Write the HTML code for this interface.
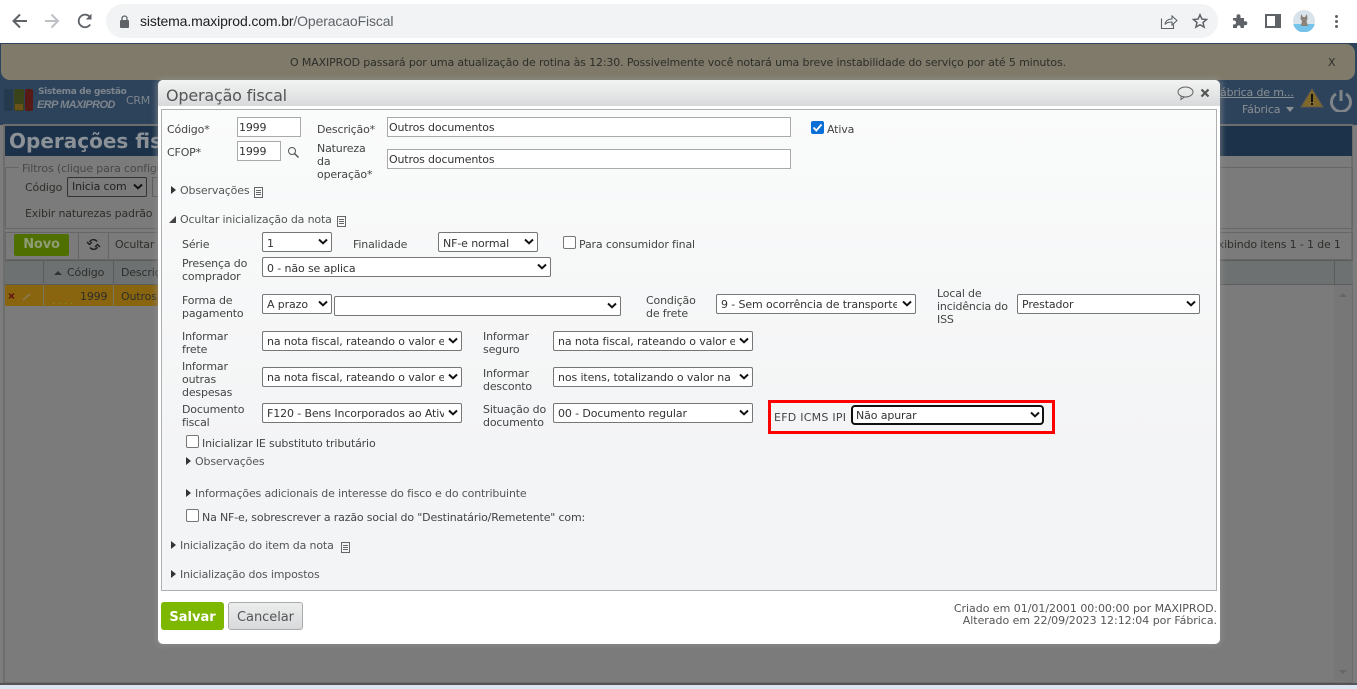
<!DOCTYPE html>
<html lang="pt"><head><meta charset="utf-8"><title>Operação fiscal</title>
<style>
html,body{margin:0;padding:0}
body{width:1357px;height:689px;overflow:hidden;position:relative;background:#7c7c7c;font:11px/13px "DejaVu Sans",Verdana,sans-serif;color:#444;letter-spacing:-.16px}
.a{position:absolute;white-space:nowrap}
.t{position:absolute;white-space:pre;color:#444;line-height:13px}
.i{position:absolute;box-sizing:border-box;background:#fff;border:1px solid #aaa;color:#333;padding:0 0 0 1px;white-space:nowrap;overflow:hidden;line-height:19px}
.s{position:absolute;box-sizing:border-box;background:#fff;border:1px solid #767676;border-radius:2px;color:#333;white-space:nowrap;overflow:hidden;height:20px;line-height:19px;padding-left:4px;letter-spacing:-.12px}
.s span{display:block;overflow:hidden}
.s svg{position:absolute;right:3px;top:5px;background:#fff;padding-left:2px}
.c{position:absolute;box-sizing:border-box;width:13px;height:13px;background:#fff;border:1px solid #767676;border-radius:2px}
.tri{position:absolute;width:0;height:0;border-top:4px solid transparent;border-bottom:4px solid transparent;border-left:5px solid #333}
.d{position:absolute;color:#2e2e2a;white-space:pre}
</style></head><body>
<svg width="0" height="0" style="position:absolute"><defs>
<symbol id="chev" viewBox="0 0 10 7"><path d="M1 1.500 5 5.300 9 1.500" fill="none" stroke="#111" stroke-width="2"/></symbol>
<symbol id="doc" viewBox="0 0 9 11"><path d="M.5.5h8v10h-8zM2 3.500h5M2 5.500h5M2 7.500h5" fill="none" stroke="#666" stroke-width="1"/></symbol>
</defs></svg>

<!-- browser toolbar -->
<div class="a" style="left:0;top:0;width:1357px;height:43px;background:#fff"></div>
<div class="a" style="left:106px;top:4px;width:1112px;height:34px;border-radius:17px;background:#f1f3f4"></div>
<svg class="a" style="left:10px;top:11px" width="60" height="20" viewBox="0 0 60 20" fill="none">
<path d="M17 10H4M10 3.500 3.500 10l6.500 6.500" stroke="#5f6368" stroke-width="2"/>
<path d="M35 10h13M41.500 3.500 48 10l-6.500 6.500" stroke="#bdc1c6" stroke-width="2"/>
</svg>
<svg class="a" style="left:76px;top:12px" width="18" height="18" viewBox="0 0 18 18" fill="none"><path d="M14.200 12.500A6.300 6.300 0 1 1 14.300 5.500" stroke="#5f6368" stroke-width="1.800"/><path d="M15.500 1.800V7.500H9.800Z" fill="#5f6368"/></svg>
<svg class="a" style="left:119px;top:15px" width="11" height="13" viewBox="0 0 11 13"><rect x="1" y="5" width="9" height="8" rx="1" fill="#5f6368"/><path d="M3 5.500V3.500a2.500 2.500 0 0 1 5 0v2" fill="none" stroke="#5f6368" stroke-width="1.300"/></svg>
<div class="a" style="left:140px;top:13px;font:14px/17px 'Liberation Sans',sans-serif;color:#202124;letter-spacing:-.13px">sistema.maxiprod.com.br<span style="color:#5f6368">/OperacaoFiscal</span></div>
<svg class="a" style="left:1160px;top:13px" width="18" height="17" viewBox="0 0 18 17" fill="none" stroke="#5f6368" stroke-width="1.100"><path d="M1.500 5.500v10h12v-4"/><path d="M5 11.500c.5-3.500 3-5.500 7-5.500V3l5 4.500-5 4.500V9c-3 0-5.500.5-7 2.500z"/></svg>
<svg class="a" style="left:1192px;top:13px" width="16" height="16" viewBox="0 0 16 16" fill="none"><path d="M8 1.800l1.900 4.300 4.600.4-3.500 3 1.100 4.600L8 11.700l-4.100 2.400L5 9.500l-3.500-3 4.600-.4z" stroke="#5f6368" stroke-width="1.500"/></svg>
<svg class="a" style="left:1232px;top:13px" width="16" height="16" viewBox="0 0 16 16"><path d="M1 5h3.500V3.200a2 2 0 0 1 4 0V5H12v3.200h1.300a2 2 0 0 1 0 4H12V15H8.500v-1.300a1.800 1.800 0 0 0-3.500 0V15H1v-3.500h1a2 2 0 0 0 0-4H1z" fill="#5f6368"/></svg>
<div class="a" style="left:1265px;top:14px;width:8px;height:10px;border:2px solid #5f6368;border-right-width:6px"></div>
<svg class="a" style="left:1293px;top:10px" width="22" height="22" viewBox="0 0 22 22"><circle cx="11" cy="11" r="11" fill="#d8e3ec"/><path d="M.3 14h21.400A11 11 0 0 1 .3 14z" fill="#75c3e8"/><path d="M8 4l2 3h2l2-3 .5 5-1 2 1.500 5H8l1-5-1.500-2z" fill="#8b8378"/></svg>
<div class="a" style="left:1335px;top:15px;width:3px;height:3px;border-radius:2px;background:#5f6368;box-shadow:0 5px 0 #5f6368,0 10px 0 #5f6368"></div>

<!-- dimmed page -->
<div class="a" style="left:0;top:43px;width:1357px;height:646px;background:#7c7c7c"></div>
<div class="a" style="left:0;top:43px;width:1357px;height:82px;background:#2d435c"></div>
<div class="a" style="left:1px;top:44px;width:1354px;height:36px;background:#7f7a69;border-radius:0 9px 9px 9px"></div>
<div class="d" style="left:290px;top:56px;line-height:13px;letter-spacing:-.14px">O MAXIPROD passará por uma atualização de rotina às 12:30. Possivelmente você notará uma breve instabilidade do serviço por até 5 minutos.</div>
<div class="d" style="left:1328px;top:56px">X</div>
<div class="a" style="left:4px;top:89px;width:9px;height:22px;border-radius:2px;background:#263a4e"></div>
<div class="a" style="left:14px;top:89px;width:10px;height:22px;border-radius:2px;background:#3a4418"></div>
<div class="a" style="left:15px;top:104px;width:8px;height:6px;background:#6a5219"></div>
<div class="a" style="left:25px;top:89px;width:8px;height:22px;border-radius:2px;background:#571a15"></div>
<div class="a" style="left:38px;top:87px;font:bold 9px/11px 'DejaVu Sans',sans-serif;color:#7d858c;letter-spacing:-.33px">Sistema de gestão</div>
<div class="a" style="left:37px;top:98px;font:italic bold 11px/14px 'Liberation Sans',sans-serif;color:#7d858c;letter-spacing:-.55px">ERP MAXIPROD</div>
<div class="a" style="left:126px;top:94px;color:#7d858c;letter-spacing:-.3px">CRM</div>
<div class="a" style="left:1220px;top:86px;color:#8a8f93;text-decoration:underline">ábrica de m...</div>
<div class="a" style="left:1242px;top:103px;color:#8a8f93">Fábrica</div>
<div class="a" style="left:1286px;top:107px;border-left:4px solid transparent;border-right:4px solid transparent;border-top:5px solid #8a8f93"></div>
<svg class="a" style="left:1300px;top:88px" width="24" height="20" viewBox="0 0 24 20"><path d="M12 1 23 19H1z" fill="#80682a" stroke="#5d5a4f"/><path d="M11 6h2v8h-2zM11 15h2v2h-2z" fill="#111"/></svg>
<svg class="a" style="left:1329px;top:88px" width="24" height="24" viewBox="0 0 24 24" fill="none" stroke="#7e8488" stroke-width="3"><path d="M7 6a9.500 9.500 0 1 0 10 0"/><path d="M12 2v11"/></svg>

<!-- page content behind -->
<div class="a" style="left:3px;top:124px;width:1350px;height:560px;box-sizing:border-box;border:2px solid #6d6d6d;background:#7b7b7b"></div>
<div class="a" style="left:5px;top:126px;width:1347px;height:30px;background:#1b324a"></div>
<div class="a" style="left:9px;top:127px;font:bold 20px/28px 'DejaVu Sans',sans-serif;color:#8b9197;letter-spacing:0">Operações fiscais</div>
<div class="a" style="left:5px;top:167px;width:1348px;height:62px;box-sizing:border-box;border:1px solid #666"></div>
<div class="a" style="left:19px;top:162px;background:#7b7b7b;color:#484848;padding:0 3px">Filtros (clique para configurar)</div>
<div class="d" style="left:25px;top:181px">Código</div>
<div class="a" style="left:67px;top:177px;width:80px;height:20px;box-sizing:border-box;border:1px solid #333;border-radius:2px;padding:2px 0 0 4px;color:#222">Inicia com<svg style="position:absolute;right:3px;top:5px" width="10" height="7"><use href="#chev"/></svg></div>
<div class="a" style="left:152px;top:177px;width:20px;height:20px;box-sizing:border-box;border:1px solid #5c5c5c"></div>
<div class="d" style="left:25px;top:207px">Exibir naturezas padrão</div>
<div class="a" style="left:5px;top:232px;width:1348px;height:28px;box-sizing:border-box;border:1px solid #666"></div>
<div class="a" style="left:14px;top:234px;width:55px;height:22px;background:#4f7000;border-radius:2px;font:bold 13px/22px 'DejaVu Sans',sans-serif;color:#8f9c75;text-align:center">Novo</div>
<div class="a" style="left:78px;top:232px;width:1px;height:27px;background:#666"></div>
<svg class="a" style="left:86px;top:238px" width="15" height="13" viewBox="0 0 15 13" fill="none" stroke="#222" stroke-width="1.500"><path d="M11 3.500C9 1 5 1 3.500 4"/><path d="M1 4l2.500 2.500L6 4" /><path d="M4 9.500c2 2.500 6 2.500 7.500-.5"/><path d="M14 9l-2.500-2.500L9 9"/></svg>
<div class="a" style="left:108px;top:232px;width:1px;height:27px;background:#666"></div>
<div class="d" style="left:115px;top:238px">Ocultar</div>
<div class="d" style="left:1211px;top:238px">Exibindo itens 1 - 1 de 1</div>
<div class="a" style="left:5px;top:260px;width:1348px;height:25px;background:#6e7172;border-top:1px solid #5c5c5c;border-bottom:1px solid #5c5c5c;box-sizing:border-box"></div>
<div class="a" style="left:43px;top:260px;width:1px;height:25px;background:#5c5c5c"></div>
<div class="a" style="left:113px;top:260px;width:1px;height:25px;background:#5c5c5c"></div>
<div class="a" style="left:1334px;top:260px;width:1px;height:25px;background:#5c5c5c"></div>
<div class="a" style="left:54px;top:271px;border-left:4px solid transparent;border-right:4px solid transparent;border-bottom:4px solid #333"></div>
<div class="d" style="left:67px;top:266px">Código</div>
<div class="d" style="left:121px;top:266px">Descrição</div>
<div class="a" style="left:5px;top:285px;width:160px;height:21px;background:#8a6510"></div>
<svg class="a" style="left:8px;top:292px" width="24" height="10" viewBox="0 0 24 10" fill="none"><path d="M1 1.500l5 5M6 1.500l-5 5" stroke="#5c1512" stroke-width="1.500"/><path d="M15 8l7-6" stroke="#8a7f60" stroke-width="1.300"/></svg>
<div class="a" style="left:43px;top:285px;width:1px;height:21px;background:#7a7660"></div>
<div class="a" style="left:113px;top:285px;width:1px;height:21px;background:#7a7660"></div>
<div class="a" style="left:53px;top:303px;width:1px;height:1px;background:#7c9a10;box-shadow:6px 0 #7c9a10,12px 0 #7c9a10,18px 0 #7c9a10"></div>
<div class="d" style="left:80px;top:290px">1999</div>
<div class="d" style="left:121px;top:290px">Outros documentos</div>
<div class="a" style="left:1334px;top:285px;width:18px;height:396px;background:#777"></div>
<div class="a" style="left:1339px;top:293px;border-left:4px solid transparent;border-right:4px solid transparent;border-bottom:4px solid #666"></div>
<div class="a" style="left:1339px;top:670px;border-left:4px solid transparent;border-right:4px solid transparent;border-top:4px solid #666"></div>
<div class="a" style="left:0;top:683px;width:1357px;height:2px;background:#555"></div>
<div class="a" style="left:0;top:685px;width:1357px;height:4px;background:#dbe6f1"></div>

<!-- modal -->
<div class="a" style="left:158px;top:80px;width:1062px;height:564px;background:#fff;border-radius:5px;box-shadow:0 0 6px 2px rgba(150,150,150,.55)"></div>
<div class="a" style="left:158px;top:80px;width:1062px;height:26px;background:linear-gradient(#f3f3f3,#d9dadb);border-radius:5px 5px 0 0"></div>
<div class="a" style="left:166px;top:86px;font:16px/20px 'DejaVu Sans',sans-serif;color:#555;letter-spacing:-.2px">Operação fiscal</div>
<svg class="a" style="left:1177px;top:86px" width="17" height="15" viewBox="0 0 17 15" fill="none" stroke="#666"><ellipse cx="8.500" cy="6" rx="7.500" ry="5"/><path d="M4 10v3.500L7.500 11"/></svg>
<svg class="a" style="left:1200px;top:88px" width="10" height="10" viewBox="0 0 10 10"><path d="M1.500 1.500l7 7M8.500 1.500l-7 7" stroke="#555" stroke-width="2.200"/></svg>
<div class="a" style="left:161px;top:109px;width:1056px;height:482px;box-sizing:border-box;border:1px solid #aeb0b2;background:#f3f4f5"></div>
<div class="a" style="left:162px;top:110px;width:1054px;height:340px;background:linear-gradient(#fafbfb,#f3f4f5)"></div>

<!-- top fields -->
<div class="t" style="left:167px;top:123px">Código*</div>
<div class="i" style="left:237px;top:117px;width:64px;height:20px">1999</div>
<div class="t" style="left:317px;top:123px">Descrição*</div>
<div class="i" style="left:387px;top:117px;width:404px;height:20px">Outros documentos</div>
<div class="c" style="left:811px;top:121px;background:#0a6fd6;border-color:#0a6fd6"></div>
<svg class="a" style="left:811px;top:121px" width="13" height="13" viewBox="0 0 13 13"><path d="M2.500 6.500 5.300 9.500 10.500 3.500" fill="none" stroke="#fff" stroke-width="1.800"/></svg>
<div class="t" style="left:827px;top:123px">Ativa</div>
<div class="t" style="left:167px;top:146px">CFOP*</div>
<div class="i" style="left:237px;top:141px;width:44px;height:20px">1999</div>
<svg class="a" style="left:287px;top:146px" width="13" height="13" viewBox="0 0 13 13" fill="none" stroke="#555"><circle cx="5" cy="5" r="3.500"/><path d="M7.500 7.500 11.500 11.500" stroke-width="1.500"/></svg>
<div class="t" style="left:317px;top:142px">Natureza
da
operação*</div>
<div class="i" style="left:387px;top:149px;width:404px;height:20px">Outros documentos</div>

<div class="tri" style="left:171px;top:186px"></div>
<div class="t" style="left:180px;top:184px;color:#555">Observações</div>
<svg class="a" style="left:254px;top:187px" width="9" height="11"><use href="#doc"/></svg>
<div class="a" style="left:169px;top:216px;border-left:7px solid transparent;border-bottom:7px solid #444"></div>
<div class="t" style="left:180px;top:213px;color:#555">Ocultar inicialização da nota</div>
<svg class="a" style="left:337px;top:216px" width="9" height="11"><use href="#doc"/></svg>

<!-- row: serie -->
<div class="t" style="left:182px;top:238px">Série</div>
<div class="s" style="left:262px;top:232px;width:70px;line-height:21px"><span>1</span><svg width="10" height="7"><use href="#chev"/></svg></div>
<div class="t" style="left:353px;top:238px">Finalidade</div>
<div class="s" style="left:438px;top:232px;width:100px;line-height:21px"><span>NF-e normal</span><svg width="10" height="7"><use href="#chev"/></svg></div>
<div class="c" style="left:563px;top:236px"></div>
<div class="t" style="left:579px;top:238px">Para consumidor final</div>

<div class="t" style="left:182px;top:257px">Presença do
comprador</div>
<div class="s" style="left:262px;top:257px;width:289px;line-height:21px"><span>0 - não se aplica</span><svg width="10" height="7"><use href="#chev"/></svg></div>

<!-- row: pagamento -->
<div class="t" style="left:182px;top:294px">Forma de
pagamento</div>
<div class="s" style="left:262px;top:294px;width:70px"><span>A prazo</span><svg width="10" height="7"><use href="#chev"/></svg></div>
<div class="s" style="left:334px;top:296px;width:287px"><span>&nbsp;</span><svg width="10" height="7"><use href="#chev"/></svg></div>
<div class="t" style="left:646px;top:294px">Condição
de frete</div>
<div class="s" style="left:716px;top:294px;width:200px"><span style="width:176px">9 - Sem ocorrência de transporte</span><svg width="10" height="7"><use href="#chev"/></svg></div>
<div class="t" style="left:937px;top:287px">Local de
incidência do
ISS</div>
<div class="s" style="left:1017px;top:294px;width:183px"><span>Prestador</span><svg width="10" height="7"><use href="#chev"/></svg></div>

<!-- row: frete -->
<div class="t" style="left:182px;top:330px">Informar
frete</div>
<div class="s" style="left:262px;top:331px;width:200px"><span style="width:177px">na nota fiscal, rateando o valor entre</span><svg width="10" height="7"><use href="#chev"/></svg></div>
<div class="t" style="left:483px;top:330px">Informar
seguro</div>
<div class="s" style="left:553px;top:331px;width:200px"><span style="width:177px">na nota fiscal, rateando o valor entre</span><svg width="10" height="7"><use href="#chev"/></svg></div>

<div class="t" style="left:182px;top:360px">Informar
outras
despesas</div>
<div class="s" style="left:262px;top:367px;width:200px"><span style="width:177px">na nota fiscal, rateando o valor entre</span><svg width="10" height="7"><use href="#chev"/></svg></div>
<div class="t" style="left:483px;top:367px">Informar
desconto</div>
<div class="s" style="left:553px;top:367px;width:200px"><span style="width:177px">nos itens, totalizando o valor na nota</span><svg width="10" height="7"><use href="#chev"/></svg></div>

<div class="t" style="left:182px;top:403px">Documento
fiscal</div>
<div class="s" style="left:262px;top:403px;width:200px"><span style="width:177px">F120 - Bens Incorporados ao Ativo</span><svg width="10" height="7"><use href="#chev"/></svg></div>
<div class="t" style="left:483px;top:403px">Situação do
documento</div>
<div class="s" style="left:553px;top:403px;width:200px"><span>00 - Documento regular</span><svg width="10" height="7"><use href="#chev"/></svg></div>

<div class="a" style="left:768px;top:400px;width:287px;height:34px;box-sizing:border-box;border:3px solid #f00"></div>
<div class="t" style="left:774px;top:411px;letter-spacing:.25px">EFD ICMS IPI</div>
<div class="s" style="left:851px;top:405px;width:193px;border:2px solid #101010;border-radius:4px;line-height:18px;padding-left:3px"><span>Não apurar</span><svg width="10" height="7" style="top:4px;right:2px"><use href="#chev"/></svg></div>

<div class="c" style="left:186px;top:435px"></div>
<div class="t" style="left:202px;top:437px">Inicializar IE substituto tributário</div>
<div class="tri" style="left:186px;top:457px"></div>
<div class="t" style="left:195px;top:455px;color:#555">Observações</div>
<div class="tri" style="left:186px;top:489px"></div>
<div class="t" style="left:195px;top:487px;color:#555">Informações adicionais de interesse do fisco e do contribuinte</div>
<div class="c" style="left:186px;top:509px"></div>
<div class="t" style="left:202px;top:511px">Na NF-e, sobrescrever a razão social do "Destinatário/Remetente" com:</div>
<div class="tri" style="left:171px;top:541px"></div>
<div class="t" style="left:180px;top:539px;color:#555">Inicialização do item da nota</div>
<svg class="a" style="left:341px;top:542px" width="9" height="11"><use href="#doc"/></svg>
<div class="tri" style="left:171px;top:570px"></div>
<div class="t" style="left:180px;top:568px;color:#555">Inicialização dos impostos</div>

<!-- footer -->
<div class="a" style="left:161px;top:602px;width:63px;height:28px;background:#7db700;border-radius:3px;font:bold 13px/32px 'DejaVu Sans',sans-serif;color:#fff;text-align:center;overflow:hidden;letter-spacing:0">Salvar</div>
<div class="a" style="left:228px;top:602px;width:75px;height:28px;box-sizing:border-box;background:linear-gradient(#eceded,#d8d9db);border:1px solid #aaa;border-radius:3px;font:13px/30px 'DejaVu Sans',sans-serif;color:#555;text-align:center;overflow:hidden;letter-spacing:-.05px">Cancelar</div>
<div class="a" style="right:140px;top:603px;text-align:right;color:#555;line-height:12px;letter-spacing:-.03px">Criado em 01/01/2001 00:00:00 por MAXIPROD.<br>Alterado em 22/09/2023 12:12:04 por Fábrica.</div>
</body></html>
